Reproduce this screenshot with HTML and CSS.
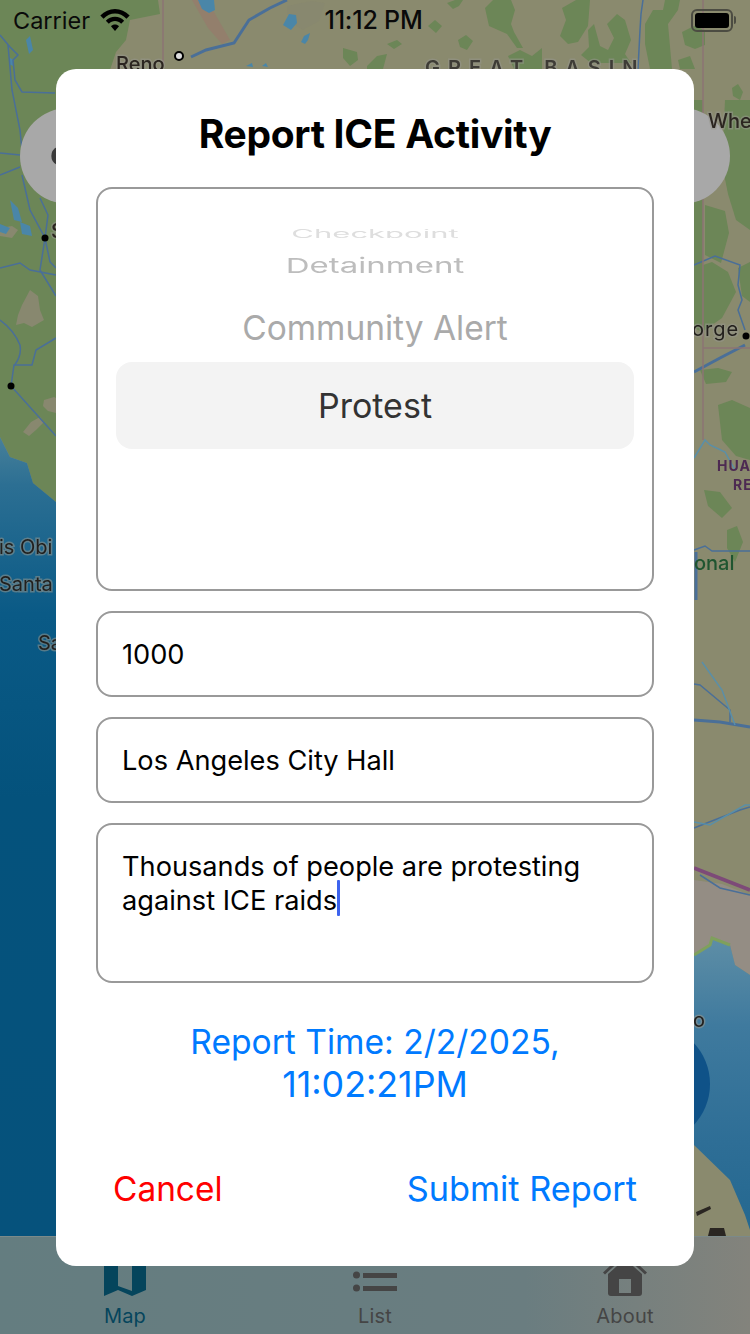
FILE: index.html
```html
<!DOCTYPE html>
<html lang="en">
<head>
<meta charset="utf-8">
<title>Report ICE Activity</title>
<link rel="stylesheet" href="styles.css">
</head>
<body>
<div class="screen">
  <main class="map-area">
    <svg class="map" viewBox="0 0 750 1240" preserveAspectRatio="none" aria-hidden="true">
      <defs>
        <linearGradient id="seaLeft" x1="0" y1="0" x2="0" y2="1">
          <stop offset="0" stop-color="#47809a"/>
          <stop offset="0.06" stop-color="#2c6f93"/>
          <stop offset="0.22" stop-color="#0a5a86"/>
          <stop offset="0.45" stop-color="#04527c"/>
          <stop offset="1" stop-color="#06527c"/>
        </linearGradient>
        <linearGradient id="seaRight" x1="0" y1="0" x2="0" y2="1">
          <stop offset="0" stop-color="#5e8ea6"/>
          <stop offset="0.3" stop-color="#3f7a9e"/>
          <stop offset="0.7" stop-color="#2e6e96"/>
          <stop offset="1" stop-color="#246890"/>
        </linearGradient>
      </defs>
      <rect class="land-tan" width="750" height="1240"/>

      <path class="land-green" d="M0 0H158L160 14 130 20 126 40 116 52 110 70 56 160 56 502 50 497 33 483 27 463 10 457 0 437Z"/>
      <path class="sea-left" d="M0 437L10 457 27 463 33 483 50 497 56 502V1240H0Z"/>
      <path class="urban" d="M694 880L722 884 750 895V975L735 965 730 945 712 938 710 945 694 955Z"/>
      <path class="sea-right" d="M694 955L710 945 712 938 730 945 735 965 750 975V1230L745 1215 730 1180 694 1145Z"/>
      <path class="coast" d="M694 955L710 945 712 938 730 945"/>

      <g class="land-green">
        <path d="M694 100H703V300H694Z"/>
        <path d="M705 205l20 6 4 22-8 30-16 -8z"/>
        <path d="M694 268l18-6 16 10 8 20-14 26-20 14-8-4z"/>
        <path d="M725 100h25v130l-14-10-8-26-6-30z"/>
        <path d="M738 268l12-6v40l-8-6z"/>
        <path d="M718 405l14-5 18 8v52l-14-4-14-16z"/>
        <path d="M700 370l18-2 14 4-6 10-20 2z"/>
        <path d="M704 490l16 2 12 16-10 10-14-12z"/>
        <path d="M727 530l10-4 6 16-8 20-8-14z"/>
      </g>
      <g class="land-green">
        <path d="M343 48l14 4 1 8-8 6-7-8zM367 66l10-10 10-2-4 15h-16zM387 44l10-4 5 4-8 5zM428 26l7-6 7 6-6 7zM447 3l8-3 8 0-4 6-6 3zM458 40l8-5 7 6-6 9-7-3z"/>
        <path d="M485 8l8-8 18 0 4 10-4 14 3 8 9 16-6 0-10-14-18-8zM508 56l12-6 12 6 10-8 0 21H514z"/>
        <path d="M562 8l14-8 14 0-2 26-10 16-10 2-8-8 6-16zM588 30l6-6 6 22 8 4 6-12-7-14 10-10 8 6 6 20-6 14 6 9 -4 0 -36 0-10-8 8-8z"/>
        <path d="M645 24l8-14 10 0 2-10 15 0-2 10-10 14 4 45h-22l-5-25z"/>
        <path d="M682 32l12-6 11 4 0 15-10 4-10-4zM678 60l12-4 5 13h-15z"/>
        <path d="M732 88l6-4 5 8-3 8-7-4z"/>
      </g>

      <path class="tan-patch" d="M287 6l24-5 14 2-6 18-16 9-10-6 2-8-8-2z"/>
      <path class="tan-patch" d="M22 305l8-15 8 6 2 14 4 10-12 7-8-4-8 2 2-10z"/>
      <path class="tan-patch" d="M23 432l8-10 9-5 4 5-8 8-7 6zM44 400l10-3 2 1V413l-8-2-5-5z"/>
      <path class="tan-patch" d="M0 228l12-2 6 4-6 8-12-2z"/>
      <path class="pink-band" d="M192 0L208 28 222 44 230 40 214 12 210 0z"/>

      <path class="water" d="M198 0h16l1 10-6 3-7-4zM283 25l6-11 7 1 1 8-6 7zM301 42l3-6 6-3-2 7-3 4zM26 40l4-4 3 14-4 4zM10 58l4 2-1 6-4-2zM10 200l8 8 4 14-8-2zM20 222l10 4 2 10-10-2zM0 224l10 4-4 6-6-2z"/>
      <path class="water" d="M246 66l6-3 1 4zM262 66l4-3 2 4z"/>

      <g class="road">
        <path d="M0 35L10 47 18 55 13 60 15 80 22 92 55 93"/>
        <path d="M8 45L12 90 20 130 22 150"/>
        <path d="M0 153L20 155M0 175L20 167"/>
        <path d="M22 175L30 210 45 238 40 270 56 296M40 198L48 215 45 238 50 262 56 268"/>
        <path d="M0 268L20 263 30 270 56 275"/>
        <path d="M0 320Q14 330 20 345 22 356 14 366M56 338L36 350 32 365 14 365 11 386M11 386L56 436"/>
        <path class="road-thick" d="M287 0L270 8 249 20 234 43 206 50 191 57"/>
        <path d="M643 0L641 14 640 30 638 69"/>
        <path d="M694 265L715 256 740 265 738 285 742 300 738 310 745 330"/>
        <path class="road-thick" d="M694 372L720 358 745 345"/>
        <path d="M694 550L705 546 712 551H750"/>
        <path d="M694 684L700 685 730 710 730 722"/>
        <path class="road-thick" d="M694 720L720 722 750 727"/>
        <path d="M694 828L740 810 750 807"/>
        <path d="M700 875L720 888 750 895"/>
        <path class="road-thick" d="M696 552L696 600"/>
      </g>
      <g class="river">
        <path d="M702 662L722 690 735 725"/>
        <path d="M694 822L710 825 745 805 750 805"/>
        <path d="M694 458L705 440 710 445 725 452 735 470"/>
      </g>
      <path class="border" d="M163 0V66M703 0V440M703 348H750"/>
      <path class="trail" d="M694 868L750 890"/>
      <path class="land-dark" d="M696 1212l14-6 1 3-14 7zM708 1236l2-8 14 0 2 8z"/>

      <circle class="btn-round" cx="68" cy="156" r="48"/>
      <circle class="btn-round" cx="682" cy="156" r="48"/>
      <path class="btn-glyph" d="M57 147a10 10 0 0 0 0 18z"/>
      <circle class="btn-blue" cx="650" cy="1084" r="60"/>
      <g class="dots">
        <circle cx="45" cy="238" r="3.500"/>
        <circle cx="11" cy="386" r="3.500"/>
        <circle cx="746" cy="336" r="3.500"/>
      </g>
      <circle class="town" cx="179" cy="56" r="4"/>
      <text class="map-label strong" x="116" y="71">Reno</text>
      <text class="map-label strong" x="708" y="128">Whee</text>
      <text class="map-label strong" x="51" y="238">S</text>
      <text class="map-label spaced" x="692" y="336">orge</text>
      <text class="map-label" x="-1" y="554">is Obi</text>
      <text class="map-label" x="-1" y="591">Santa</text>
      <text class="map-label" x="38" y="650">Sa</text>
      <text class="map-label spaced-wide" x="425" y="75">GREAT BASIN</text>
      <text class="map-label hua" x="717" y="471">HUA</text>
      <text class="map-label hua" x="733" y="490">RE</text>
      <text class="map-label nat" x="694" y="570">onal</text>
      <text class="map-label" x="693" y="1027">o</text>
    </svg>
  </main>

  <nav class="tabbar">
    <div class="tab tab-active">
      <svg class="tab-icon" viewBox="0 0 44 44" aria-hidden="true"><path d="M1 0H15V34L29 39V0H43V38L29 44 15 38 1 44Z" fill="currentColor"/></svg>
      <span>Map</span>
    </div>
    <div class="tab">
      <svg class="tab-icon" viewBox="0 0 44 44" aria-hidden="true"><circle cx="3.500" cy="10" r="3.500" fill="currentColor"/><circle cx="3.500" cy="23" r="3.500" fill="currentColor"/><circle cx="3.500" cy="36" r="3.500" fill="currentColor"/><rect x="10" y="8" width="34" height="5" fill="currentColor"/><rect x="10" y="21" width="34" height="5" fill="currentColor"/><rect x="10" y="34" width="34" height="5" fill="currentColor"/></svg>
      <span>List</span>
    </div>
    <div class="tab">
      <svg class="tab-icon" viewBox="0 0 44 44" aria-hidden="true"><path d="M22 0L44 20.500l-2 2L22 4 2 22.500l-2-2z" fill="currentColor"/><path d="M5 22L22 7l17 15v19a3 3 0 0 1-3 3H8a3 3 0 0 1-3-3zM16 27v14h12V27z" fill="currentColor" fill-rule="evenodd"/></svg>
      <span>About</span>
    </div>
  </nav>

  <div class="statusbar">
    <div class="status-left">
      <span>Carrier</span>
      <svg class="wifi" viewBox="0 0 32 24" aria-hidden="true"><path d="M16 0C10 0 4.500 2.500 0 7l3.500 3.500C7 7 11.500 5 16 5s9 2 12.500 5.500L32 7C27.500 2.500 22 0 16 0z"/><path d="M16 8.500c-3.800 0-7.400 1.500-10 4.200l3.300 3.300c1.800-1.800 4.200-2.800 6.700-2.800s4.900 1 6.700 2.800l3.300-3.300C23.400 10 19.800 8.500 16 8.500z"/><path d="M16 17c-1.700 0-3.200.7-4.400 1.800L16 24l4.400-5.200C19.200 17.700 17.700 17 16 17z"/></svg>
    </div>
    <span class="status-time">11:12 PM</span>
    <div class="status-right">
      <div class="battery"><div class="battery-fill"></div></div>
      <div class="battery-nub"></div>
    </div>
  </div>

  <section class="modal">
    <h1 class="modal-title">Report ICE Activity</h1>

    <div class="picker">
      <div class="picker-selection"></div>
      <div class="wheel">
        <div class="wheel-row row-far"><span>Checkpoint</span></div>
        <div class="wheel-row row-mid"><span>Detainment</span></div>
        <div class="wheel-row row-near"><span>Community Alert</span></div>
        <div class="wheel-row row-current"><span>Protest</span></div>
      </div>
    </div>

    <div class="field">1000</div>
    <div class="field">Los Angeles City Hall</div>
    <div class="field field-multi">Thousands of people are protesting against ICE raids<span class="caret"></span></div>

    <p class="report-time">Report Time: 2/2/2025,<br><span class="report-clock">11:02:21PM</span></p>

    <div class="actions">
      <span class="action-cancel">Cancel</span>
      <span class="action-submit">Submit Report</span>
    </div>
  </section>
</div>
</body>
</html>
```

FILE: styles.css
```css
* { box-sizing: border-box; }
html, body { margin: 0; padding: 0; }
body { font-family: Inter, "Liberation Sans", sans-serif; background: #666; }

.screen {
  position: relative;
  width: 750px;
  height: 1334px;
  overflow: hidden;
  display: flex;
  flex-direction: column;
}

/* Map */
.map-area { flex: 1; min-height: 0; overflow: hidden; }
.map { display: block; width: 750px; height: 1240px; filter: blur(0.6px); }
.land-tan { fill: #8a8a6e; }
.land-green { fill: #6c8657; }
.tan-patch { fill: #88886f; }
.pink-band { fill: #937f6c; }
.sea-left { fill: url(#seaLeft); }
.sea-right { fill: url(#seaRight); }
.urban { fill: #948d84; }
.coast { fill: none; stroke: #7fa05c; stroke-width: 3; }
.water { fill: #4a86a8; }
.road { fill: none; stroke: #4a6f98; stroke-width: 1.5; }
.road-thick { stroke-width: 3; }
.river { fill: none; stroke: #5a8fa8; stroke-width: 1.5; }
.border { fill: none; stroke: #8c7474; stroke-width: 1.5; }
.trail { fill: none; stroke: #7d4a78; stroke-width: 3.5; }
.land-dark { fill: #2a2622; }
.btn-round { fill: #a8a8a8; }
.btn-glyph { fill: #3a3a3a; }
.btn-blue { fill: #0f5288; }
.dots circle { fill: #000; }
.town { fill: #ddd; stroke: #000; stroke-width: 2; }
.map-label { font-size: 20px; fill: #221f1c; stroke: rgba(150,150,140,.55); stroke-width: 3px; paint-order: stroke; font-family: Inter, sans-serif; }
.strong { font-weight: 500; fill: #2b2520; }
.spaced { letter-spacing: 1px; }
.spaced-wide { letter-spacing: 8px; font-size: 20px; font-weight: 600; fill: #3e3c36; }
.hua { font-size: 14px; font-weight: 700; letter-spacing: 1px; fill: #4d2a52; stroke: none; }
.nat { font-weight: 500; fill: #1f5530; stroke: none; }

/* Tab bar */
.tabbar {
  flex: none;
  height: 98px;
  display: grid;
  grid-template-columns: repeat(3, 1fr);
  background: linear-gradient(90deg, #647d80 0%, #6a7d80 70%, #83837c 100%);
  border-top: 1px solid #7b8a8a;
  color: #454545;
}
.tab {
  display: flex;
  flex-direction: column;
  align-items: center;
  padding-top: 15px;
  font-size: 20px;
  line-height: 24px;
  letter-spacing: 0.2px;
}
.tab-icon { display: block; width: 44px; height: 44px; margin-bottom: 8px; }
.tab-active { color: #05455c; }

/* Status bar */
.statusbar {
  position: absolute;
  top: 0;
  left: 0;
  right: 0;
  height: 40px;
  padding: 0 14px 0 13px;
  display: grid;
  grid-template-columns: 1fr auto 1fr;
  align-items: center;
  font-size: 23.500px;
  color: #0a0a0a;
}
.status-left { display: flex; align-items: center; gap: 10px; }
.status-time { font-size: 25px; font-weight: 500; letter-spacing: -0.2px; margin-right: 2px; }
.status-right { display: flex; align-items: center; justify-content: flex-end; gap: 1px; }
.wifi { width: 30px; height: 22px; fill: #000; }
.battery {
  width: 42px;
  height: 23px;
  padding: 2px;
  border: 2px solid #4c4c42;
  border-radius: 6px;
}
.battery-fill { width: 100%; height: 100%; background: #000; border-radius: 3px; }
.battery-nub { width: 2px; height: 8px; background: #4c4c42; border-radius: 0 2px 2px 0; }

/* Modal */
.modal {
  position: absolute;
  left: 56px;
  top: 69px;
  width: 638px;
  height: 1197px;
  padding: 40px 40px 0;
  background: #fff;
  border-radius: 20px;
  display: flex;
  flex-direction: column;
}
.modal-title {
  margin: 0 0 28px;
  font-size: 39px;
  line-height: 50px;
  font-weight: 700;
  letter-spacing: -0.3px;
  text-align: center;
  color: #000;
}
.picker {
  position: relative;
  height: 404px;
  padding-top: 40px;
  margin-bottom: 20px;
  border: 2px solid #999;
  border-radius: 16px;
  flex: none;
}
.picker-selection {
  position: absolute;
  left: 18px;
  right: 18px;
  top: 173px;
  height: 87px;
  border-radius: 16px;
  background: #f3f3f3;
}
.wheel { position: relative; text-align: center; }
.wheel-row { display: flex; justify-content: center; align-items: center; overflow: hidden; }
.wheel-row span { display: block; white-space: nowrap; }
.row-far { height: 9px; margin-bottom: 2px; color: #dedede; font-size: 31px; }
.row-far span { transform: scaleY(0.36); }
.row-mid { height: 52px; color: #bdbdbd; font-size: 33px; }
.row-mid span { transform: scaleY(0.62); }
.row-near { height: 72px; color: #aaa; font-size: 33.500px; }
.row-current { height: 82px; color: #333; font-size: 34px; }

.field {
  flex: none;
  height: 86px;
  margin-bottom: 20px;
  padding: 0 24px;
  display: flex;
  align-items: center;
  border: 2px solid #999;
  border-radius: 16px;
  font-size: 27.200px;
  color: #000;
}
.field-multi {
  display: block;
  height: 160px;
  margin-bottom: 37px;
  padding: 25px 24px 0;
  line-height: 34px;
}
.caret {
  display: inline-block;
  width: 3px;
  height: 36px;
  margin: -10px -3px -6px 0;
  background: #3d63ee;
  border-radius: 1px;
}
.report-time {
  margin: 0 0 61px;
  font-size: 33.600px;
  line-height: 43px;
  text-align: center;
  color: #007aff;
}
.report-clock { font-size: 35.800px; }
.actions {
  display: flex;
  justify-content: space-between;
  padding: 0 17px;
  line-height: 44px;
}
.action-cancel { color: #ff0000; font-size: 33.400px; }
.action-submit { color: #007aff; font-size: 34.300px; }
```
